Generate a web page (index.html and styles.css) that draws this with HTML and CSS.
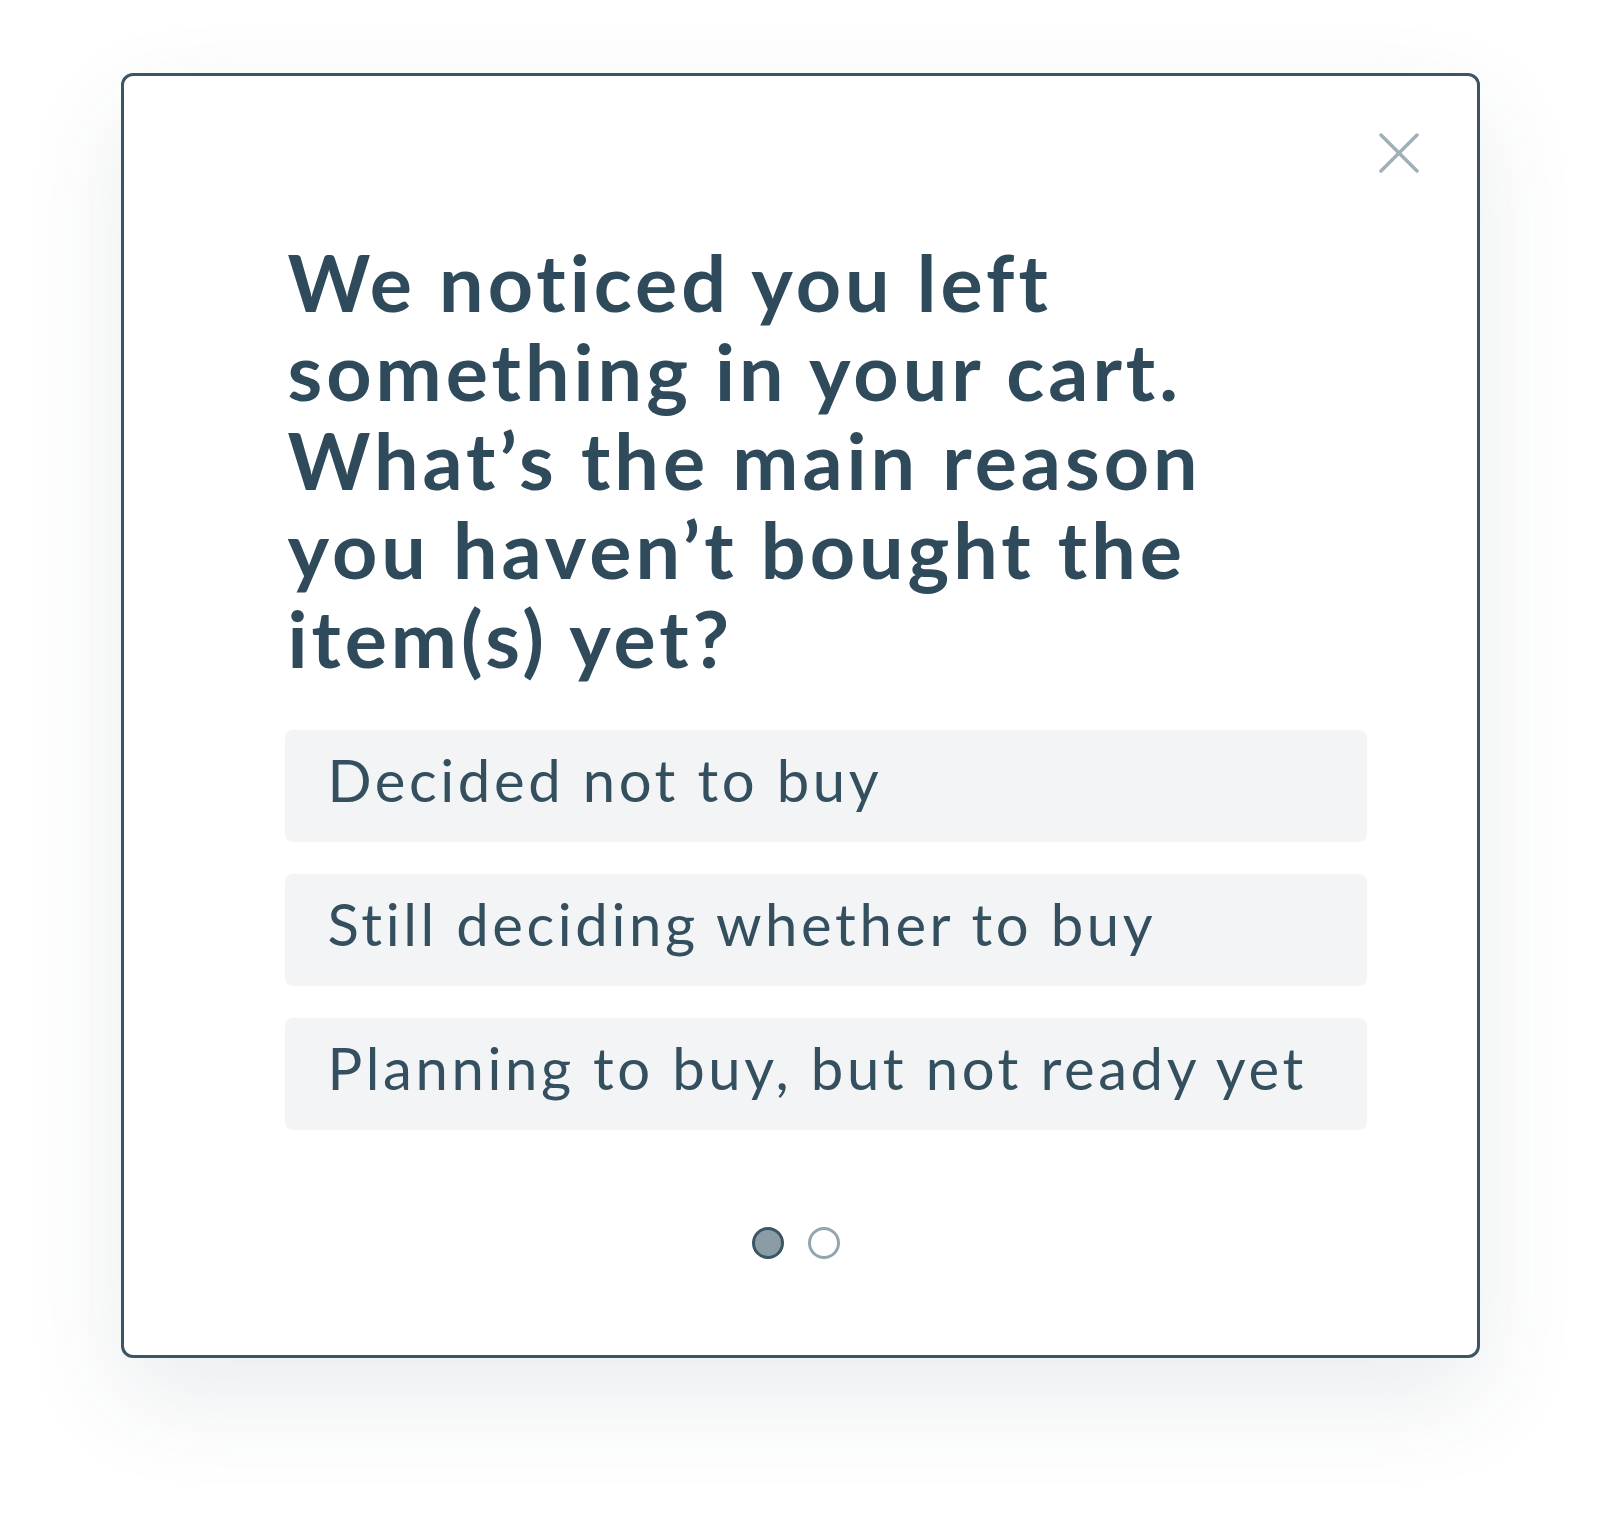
FILE: index.html
```html
<!DOCTYPE html>
<html lang="en">
<head>
  <meta charset="UTF-8">
  <meta name="viewport" content="width=device-width, initial-scale=1.0">
  <title>Cart survey</title>
  <link rel="stylesheet" href="styles.css">
</head>
<body>
  <div class="survey-card">
    <button class="close" aria-label="Close">
      <svg width="40" height="40" viewBox="0 0 40 40">
        <line x1="2" y1="2" x2="38" y2="38" />
        <line x1="38" y1="2" x2="2" y2="38" />
      </svg>
    </button>

    <h1 class="question">We noticed you left something in your cart. What’s the main reason you haven’t bought the item(s) yet?</h1>

    <div class="options">
      <div class="option">Decided not to buy</div>
      <div class="option">Still deciding whether to buy</div>
      <div class="option">Planning to buy, but not ready yet</div>
    </div>

    <div class="pager">
      <span class="dot active"></span>
      <span class="dot"></span>
    </div>
  </div>
</body>
</html>
```

FILE: styles.css
```css
body {
  font-family: 'Lato', 'Noto Sans', sans-serif;
  font-variant-ligatures: none;
  background-color: #ffffff;
  margin: 0;
  padding: 73px 0 169px;
}

.survey-card {
  position: relative;
  width: 1359px;
  margin: 0 auto;
  box-sizing: border-box;
  padding: 161px 110px 96px 161px;
  background-color: #ffffff;
  border: 3px solid #3b5565;
  border-radius: 12px;
  box-shadow: 0 40px 100px rgba(47, 72, 88, 0.10);
}

.close {
  position: absolute;
  top: 57px;
  right: 58px;
  width: 40px;
  height: 40px;
  padding: 0;
  border: none;
  background: none;
  cursor: pointer;
}

.close svg {
  display: block;
  stroke: #9fb0b8;
  stroke-width: 3.5;
  stroke-linecap: round;
}

.question {
  max-width: 1000px;
  margin: 0 0 48px;
  padding-left: 3px;
  font-size: 79px;
  font-weight: 700;
  line-height: 89px;
  letter-spacing: 4px;
  color: #2f4a5a;
}

.options {
  display: flex;
  flex-direction: column;
  gap: 32px;
}

.option {
  background-color: #f3f4f6;
  border-radius: 8px;
  padding: 21px 38px 33px 43px;
  font-size: 58px;
  line-height: 58px;
  letter-spacing: 3.6px;
  color: #34505f;
  cursor: pointer;
}

.pager {
  display: flex;
  justify-content: center;
  gap: 24px;
  margin-top: 97px;
  padding-right: 60px;
}

.dot {
  width: 32px;
  height: 32px;
  box-sizing: border-box;
  border-radius: 50%;
  border: 3px solid #93a6b0;
  background-color: #ffffff;
}

.dot.active {
  border-color: #3b5565;
  background-color: #8a9ca6;
}
```
